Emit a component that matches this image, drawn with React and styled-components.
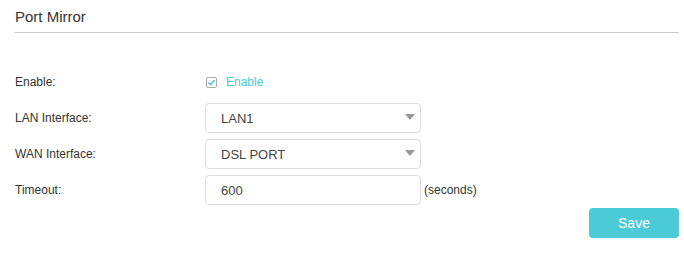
import styled, { createGlobalStyle } from "styled-components"

const GlobalStyle = createGlobalStyle`
  body {
    margin: 0;
    background: #ffffff;
    font-family: "Liberation Sans", Arial, sans-serif;
  }
`

const SelectField = ({ value }) => (
  <Field>
    <FieldText>{value}</FieldText>
    <Arrow viewBox="0 0 10 6">
      <path d="M0 0 L10 0 L5 6 Z" fill="#999999" />
    </Arrow>
  </Field>
)

export default function App() {
  return (
    <Page>
      <GlobalStyle />
      <Title>Port Mirror</Title>
      <Form>
        <Row>
          <Label>Enable:</Label>
          <CheckWrap>
            <CheckBox>
              <svg width="9" height="9" viewBox="0 0 9 9">
                <path d="M1.5 4.6 L3.6 6.6 L7.6 2.2" fill="none" stroke="#4acbd6" strokeWidth="1.6" />
              </svg>
            </CheckBox>
            <CheckText>Enable</CheckText>
          </CheckWrap>
        </Row>
        <Row>
          <Label>LAN Interface:</Label>
          <SelectField value="LAN1" />
        </Row>
        <Row>
          <Label>WAN Interface:</Label>
          <SelectField value="DSL PORT" />
        </Row>
        <Row>
          <Label>Timeout:</Label>
          <Field>
            <FieldText>600</FieldText>
          </Field>
          <Unit>(seconds)</Unit>
        </Row>
      </Form>
      <Actions>
        <SaveButton>Save</SaveButton>
      </Actions>
    </Page>
  )
}

const Page = styled.div`
  width: 684px;
  height: 263px;
  padding: 0 5px 0 14px;
  box-sizing: border-box;
`

const Title = styled.h2`
  margin: 0;
  padding: 8px 0 6px 1px;
  font-size: 15px;
  line-height: 18px;
  font-weight: 400;
  color: #333333;
  border-bottom: 1px solid #cccccc;
`

const Form = styled.div`
  display: flex;
  flex-direction: column;
  gap: 6px;
  padding: 34px 0 0 1px;
`

const Row = styled.div`
  display: flex;
  align-items: center;
  height: 30px;
`

const Label = styled.span`
  width: 190px;
  flex-shrink: 0;
  font-size: 12px;
  color: #333333;
`

const CheckWrap = styled.label`
  display: flex;
  align-items: center;
  gap: 9px;
  margin-left: 1px;
`

const CheckBox = styled.span`
  width: 11px;
  height: 11px;
  box-sizing: border-box;
  border: 1px solid #aaaaaa;
  border-radius: 2px;
  display: flex;
  align-items: center;
  justify-content: center;
`

const CheckText = styled.span`
  font-size: 12px;
  color: #4acbd6;
`

const Field = styled.div`
  width: 216px;
  height: 30px;
  box-sizing: border-box;
  border: 1px solid #dddddd;
  border-radius: 4px;
  display: flex;
  align-items: center;
  justify-content: space-between;
  padding: 0 5px 0 15px;
`

const FieldText = styled.span`
  font-size: 13px;
  color: #444444;
`

const Arrow = styled.svg`
  width: 10px;
  height: 6px;
  margin-top: -3px;
`

const Unit = styled.span`
  margin-left: 3px;
  font-size: 12px;
  color: #333333;
`

const Actions = styled.div`
  display: flex;
  justify-content: flex-end;
  padding-top: 3px;
`

const SaveButton = styled.button`
  width: 90px;
  height: 30px;
  border: none;
  border-radius: 4px;
  background: #4acbd6;
  color: #ffffff;
  font-family: "Liberation Sans", Arial, sans-serif;
  font-size: 14px;
  cursor: pointer;
`
